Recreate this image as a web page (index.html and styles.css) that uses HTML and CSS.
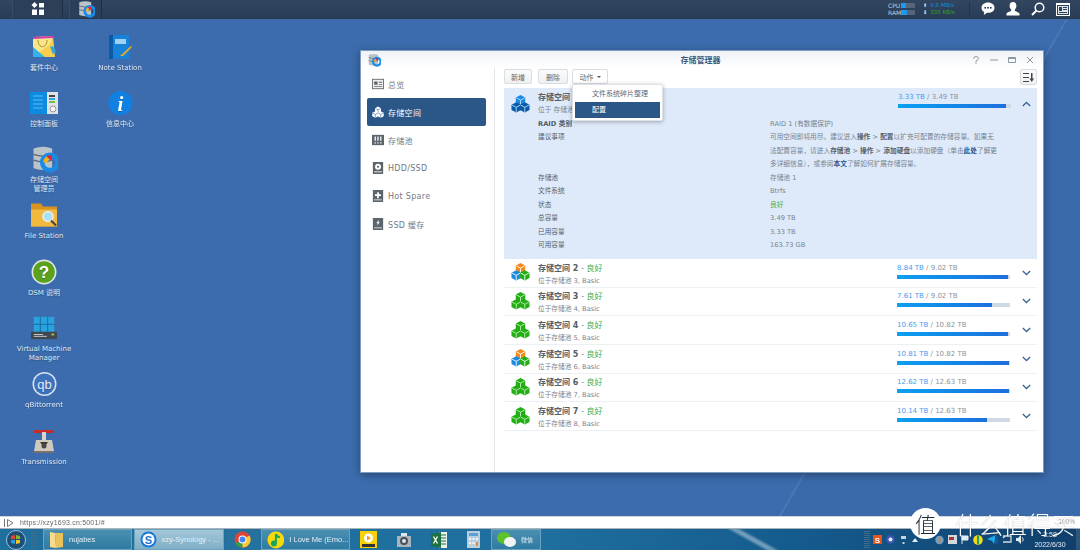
FILE: index.html
```html
<!DOCTYPE html>
<html lang="zh-CN">
<head>
<meta charset="utf-8">
<title>存储管理器</title>
<link rel="stylesheet" href="styles.css">
</head>
<body>
<svg class="defs" width="0" height="0">
  <symbol id="cubes" viewBox="0 0 20 20">
    <g class="cube-top"><path d="M10 1l5 2.6v5.6l-5 2.6-5-2.6V3.600z"/><path class="cube-line" d="M5.500 4l4.500 2.400L14.500 4M10 6.400v5"/></g>
    <g class="cube-left"><path d="M5.500 8.600l5 2.600v5.700l-5 2.600-5-2.600v-5.700z"/><path class="cube-line" d="M1 11.600l4.500 2.400 4.500-2.400M5.500 14v5"/></g>
    <g class="cube-right"><path d="M14.500 8.600l5 2.600v5.700l-5 2.600-5-2.600v-5.700z"/><path class="cube-line" d="M10 11.600l4.500 2.400 4.500-2.400M14.500 14v5"/></g>
  </symbol>
  <symbol id="storage" viewBox="0 0 24 24">
    <path d="M3 3q8-3 16 0v17q-8 3-16 0z" fill="#b9c3c9"/>
    <path d="M3 8q8 3 16 0M3 13q8 3 16 0" fill="none" stroke="#5c666c" stroke-width="1.200"/>
    <circle cx="17" cy="15" r="6.500" fill="none" stroke="#1b8be8" stroke-width="4"/>
    <path d="M11.500 15a6 6 0 0 1 3-5.300l1.500 3a3 3 0 0 0-1 2.300z" fill="#f7b21a"/>
    <path d="M14.500 9.500l4-1 .5 4.500-2.500-.5z" fill="#e3222a"/>
  </symbol>
</svg>

<div class="screen">
  <header class="topbar">
    <div class="top-left">
      <div class="top-btn top-grid"><svg width="14" height="14" viewBox="0 0 14 14"><path class="w" d="M3.500 0l3 3-3 3-3-3zM8 1h5v4.500H8zM1 7.500h5V13H1zM8 7.500h5V13H8z"/></svg></div>
      <div class="top-btn top-app"><svg width="18" height="18"><use href="#storage"/></svg></div>
    </div>
    <div class="top-right">
      <div class="meters">
        <div class="meter"><span>CPU</span><i class="m-bar"><b class="m-cpu"></b></i></div>
        <div class="meter"><span>RAM</span><i class="m-bar"><b class="m-ram"></b></i></div>
      </div>
      <div class="rates">
        <div class="rate up"><em>⬆</em>9.8 MB/s</div>
        <div class="rate down"><em>⬇</em>335 KB/s</div>
      </div>
      <div class="top-icons">
        <svg width="14" height="14" viewBox="0 0 15 14"><path class="w" d="M7.500 0C3.400 0 .5 2.500.5 5.700c0 2 1.100 3.600 2.900 4.600L3 13.500l3.500-2.400h1C11.600 11.100 14.500 8.900 14.500 5.700S11.600 0 7.500 0z"/><circle cx="4.500" cy="5.700" r="1" fill="#2d415b"/><circle cx="7.500" cy="5.700" r="1" fill="#2d415b"/><circle cx="10.500" cy="5.700" r="1" fill="#2d415b"/></svg>
        <svg width="14" height="14" viewBox="0 0 14 14"><path class="w" d="M7 0c2.200 0 3.400 1.700 3.400 3.800 0 1.600-.7 3-1.500 3.800v1.500c1.700.6 4.100 1.300 4.600 2.500v2H.5v-2c.5-1.200 2.900-1.900 4.600-2.500V7.600C4.300 6.800 3.600 5.400 3.600 3.800 3.600 1.700 4.800 0 7 0z"/></svg>
        <svg width="14" height="14" viewBox="0 0 14 14"><circle cx="8.500" cy="5.500" r="4.300" fill="none" stroke="#fff" stroke-width="1.500"/><path d="M5.500 8.500L1 13" stroke="#fff" stroke-width="2"/></svg>
        <svg width="14" height="13" viewBox="0 0 14 13"><path class="w" d="M0 0h14v13H0z"/><path d="M1 2h12v10H1z" fill="#2d415b"/><path d="M2 3h10v8H2z" fill="#dfe5ea"/><path d="M3 4h3v4H3z" fill="#2d415b"/><path d="M7 4.500h4M7 6.500h4M3 9.500h8" stroke="#2d415b"/></svg>
      </div>
    </div>
  </header>

  <main class="desktop">
    <div class="icons">
      <a class="dicon"><svg class="ic" width="26" height="26" viewBox="0 0 26 26"><path d="M2 3l20-1 2 21H2z" fill="#f7cf4a"/><path d="M2 3l20-1v3H2z" fill="#d63bb0"/><path d="M2 5l20-1-4 7-16 12z" fill="#f8e68a"/><path d="M2 13l12 10H2z" fill="#35b3e8"/><path d="M7 6c0 9 9 9 9 0" fill="none" stroke="#b5862a"/><path d="M19 13l3-1 3 6-3 2z" fill="#3aa5dc"/></svg><span>套件中心</span></a>
      <a class="dicon"><svg class="ic" width="28" height="24" viewBox="0 0 28 24"><path d="M0 1h17v22H0z" fill="#0d8be0"/><path d="M17 1h11v22H17z" fill="#dfe3e6"/><path d="M3 5h10M3 9h10M3 13h10M3 17h10" stroke="#5cbcf2"/><path d="M19 4h6v2h-6z" fill="#444"/><path d="M19 7h6v2h-6z" fill="#2aa7e6"/><path d="M19 10h6v2h-6z" fill="#7ac142"/><circle cx="23" cy="18" r="3" fill="#f5f5f5" stroke="#999"/></svg><span>控制面板</span></a>
      <a class="dicon"><svg class="ic" width="28" height="28"><use href="#storage"/></svg><span>存储空间<br>管理员</span></a>
      <a class="dicon"><svg class="ic" width="28" height="25" viewBox="0 0 28 25"><path d="M1 1h10l2 3h14v20H1z" fill="#d8941e"/><path d="M1 7h26v17H1z" fill="#f2b93f"/><circle cx="18" cy="14" r="5" fill="#a8e0f5" stroke="#eee" stroke-width="1.500"/><path d="M21 18l5 5" stroke="#444" stroke-width="2"/></svg><span>File Station</span></a>
      <a class="dicon"><svg class="ic" width="26" height="26" viewBox="0 0 26 26"><circle cx="13" cy="13" r="12.500" fill="#dfe6e0"/><circle cx="13" cy="13" r="10.800" fill="#5aa11e"/><text x="13" y="19" class="q-glyph">?</text></svg><span>DSM 说明</span></a>
      <a class="dicon"><svg class="ic" width="26" height="26" viewBox="0 0 28 26"><path d="M3 1h22v17H3z" fill="#29a3e0"/><path d="M10 1v17M18 1v17M3 9h22" stroke="#14689e"/><path d="M0 17h28v8H0z" fill="#40474e"/><path d="M3 20h10M3 22h14" stroke="#cbd0d3"/><path d="M22 20h3" stroke="#a3c94a" stroke-width="2"/></svg><span>Virtual Machine<br>Manager</span></a>
      <a class="dicon"><svg class="ic" width="25" height="25" viewBox="0 0 25 25"><circle cx="12.500" cy="12.500" r="12" fill="#d7e2f2"/><circle cx="12.500" cy="12.500" r="10.500" fill="#3f72bd"/><text x="12.500" y="17" class="qb-glyph">qb</text></svg><span>qBittorrent</span></a>
      <a class="dicon"><svg class="ic" width="22" height="24" viewBox="0 0 22 24"><path d="M3 11h16l2 11H1z" fill="#cfc9c0"/><path d="M1 22h20v2H1z" fill="#77716a"/><path d="M1 1h20v3H1z" fill="#c62a2a"/><path d="M9 3h4v8H9z" fill="#d8d3cc"/><path d="M7 13h8l-2 3h-4z" fill="#3f3a36"/><circle cx="11" cy="17" r="2.500" fill="#4c4742"/></svg><span>Transmission</span></a>
      <a class="dicon"><svg class="ic" width="26" height="26" viewBox="0 0 26 26"><path d="M2 1h20v24H2z" fill="#1882d8"/><path d="M2 1h4v24H2z" fill="#0b5aa8"/><path d="M8 5h11v5H8z" fill="#9fd1f3"/><path d="M24 12L13 22l3 0 9-9z" fill="#f2a81d"/></svg><span>Note Station</span></a>
      <a class="dicon"><svg class="ic" width="25" height="25" viewBox="0 0 25 25"><circle cx="12.500" cy="12.500" r="12" fill="#1080e2"/><text x="12.500" y="20" class="i-glyph">i</text></svg><span>信息中心</span></a>
    </div>

    <section class="window">
      <div class="titlebar">
        <svg class="title-icon" width="14" height="14"><use href="#storage"/></svg>
        <h1>存储管理器</h1>
        <div class="win-btns">
          <svg width="8" height="8" viewBox="0 0 8 8"><path d="M1.500 2.500Q2 .5 4 .5t2.500 2Q6 4 4 5v1.500M4 7v1" class="wb"/></svg>
          <svg width="8" height="8" viewBox="0 0 8 8"><path d="M0 4h8" class="wb"/></svg>
          <svg width="8" height="8" viewBox="0 0 8 8"><path d="M.5 1.500h7v5h-7zM.5 2.500h7" class="wb"/></svg>
          <svg width="8" height="8" viewBox="0 0 8 8"><path d="M1 1l6 6M7 1L1 7" class="wb"/></svg>
        </div>
      </div>
      <div class="win-body">
        <nav class="side">
          <a class="nav"><svg viewBox="0 0 14 12"><path class="g" d="M0 0h14v12H0z"/><path d="M1 1h12v10H1z" fill="#f0f0f0"/><path class="g" d="M2.500 3h4v4h-4zM8 3.500h4v1H8zM8 6h4v1H8zM2.500 8.500H12v1H2.500z"/></svg>总览</a>
          <a class="nav active"><svg viewBox="0 0 20 20"><use href="#cubes" class="c-white"/></svg>存储空间</a>
          <a class="nav"><svg viewBox="0 0 14 12"><path class="g" d="M0 0h14v12H0z"/><path d="M3 2h1.500v5H3zM6.200 2h1.500v5H6.200zM9.500 2H11v5H9.500zM3 8.500h1.500V10H3zM6.200 8.500h1.500V10H6.200zM9.500 8.500H11V10H9.500z" fill="#fff"/></svg>存储池</a>
          <a class="nav"><svg viewBox="0 0 14 14"><path class="g" d="M1 0h12v14H1z"/><circle cx="7" cy="5.500" r="3.500" fill="#fff"/><circle cx="7" cy="5.500" r="1.200" fill="#555"/><path d="M2.500 11h9v1h-9z" fill="#fff"/></svg>HDD/SSD</a>
          <a class="nav"><svg viewBox="0 0 14 14"><path class="g" d="M1 0h12v14H1z"/><path d="M6 2.500h2V5h2.500v2H8v2.500H6V7H3.500V5H6zM2.500 11h9v1h-9z" fill="#fff"/></svg>Hot Spare</a>
          <a class="nav"><svg viewBox="0 0 14 14"><path class="g" d="M1 0h12v14H1z"/><path d="M8 2L5 6h2l-1 3 3-4H7.500zM2.500 11h9v1h-9z" fill="#fff"/></svg>SSD 缓存</a>
        </nav>
        <div class="content">
          <div class="toolbar">
            <button class="btn">新增</button>
            <button class="btn btn-del">删除</button>
            <button class="btn btn-action">动作<i class="caret"></i></button>
            <button class="btn btn-view"><svg width="11" height="9" viewBox="0 0 11 9"><path d="M0 .500h6M0 4.500h6M0 8.500h6" stroke="#444" fill="none"/><path d="M8 0h1.500v5.500H11L8.750 9 6.500 5.500H8z" fill="#444"/></svg></button>
          </div>
          <div class="menu">
            <div class="menu-item first">文件系统碎片整理</div>
            <div class="menu-item sel">配置</div>
          </div>

          <article class="vol open">
            <div class="vol-head">
              <svg class="cube-ic" width="19" height="19"><use href="#cubes" class="c-blue"/></svg>
              <div class="vol-name">
                <div class="vol-title">存储空间</div>
                <div class="vol-sub">位于 存储池</div>
              </div>
              <div class="usage"><div class="usage-txt"><b>3.33 TB</b> / 3.49 TB</div><div class="bar"><div class="fill" style="width:95.500%"></div></div></div>
              <svg class="chev" width="9" height="6" viewBox="0 0 9 6"><path d="M.8 5L4.500 1.500 8.200 5"/></svg>
            </div>
            <dl class="facts">
              <dt class="strong">RAID 类别</dt><dd>RAID 1 (有数据保护)</dd>
              <dt class="tall-label">建议事项</dt><dd class="advice">可用空间即将用尽。建议进入<strong>操作</strong> &gt; <strong>配置</strong>以扩充可配置的存储容量。如果无<br>法配置容量，请进入<strong>存储池</strong> &gt; <strong>操作</strong> &gt; <strong>添加硬盘</strong>以添加硬盘（单击<a>此处</a>了解更<br>多详细信息），或参阅<a>本文</a>了解如何扩展存储容量。</dd>
              <dt>存储池</dt><dd>存储池 1</dd>
              <dt>文件系统</dt><dd>Btrfs</dd>
              <dt>状态</dt><dd class="ok">良好</dd>
              <dt>总容量</dt><dd>3.49 TB</dd>
              <dt>已用容量</dt><dd>3.33 TB</dd>
              <dt>可用容量</dt><dd>163.73 GB</dd>
            </dl>
          </article>

          <article class="vol row">
            <svg class="cube-ic" width="19" height="19"><use href="#cubes" class="c-mixed"/></svg>
            <div class="vol-name"><div class="vol-title">存储空间 2 <span class="dash">- </span><span class="ok">良好</span></div><div class="vol-sub">位于存储池 3, Basic</div></div>
            <div class="usage"><div class="usage-txt"><b>8.84 TB</b> / 9.02 TB</div><div class="bar"><div class="fill" style="width:98%"></div></div></div>
            <svg class="chev" width="9" height="6" viewBox="0 0 9 6"><path d="M.8 1L4.500 4.500 8.200 1"/></svg>
          </article>
          <article class="vol row">
            <svg class="cube-ic" width="19" height="19"><use href="#cubes" class="c-green"/></svg>
            <div class="vol-name"><div class="vol-title">存储空间 3 <span class="dash">- </span><span class="ok">良好</span></div><div class="vol-sub">位于存储池 4, Basic</div></div>
            <div class="usage"><div class="usage-txt"><b>7.61 TB</b> / 9.02 TB</div><div class="bar"><div class="fill" style="width:84%"></div></div></div>
            <svg class="chev" width="9" height="6" viewBox="0 0 9 6"><path d="M.8 1L4.500 4.500 8.200 1"/></svg>
          </article>
          <article class="vol row">
            <svg class="cube-ic" width="19" height="19"><use href="#cubes" class="c-green"/></svg>
            <div class="vol-name"><div class="vol-title">存储空间 4 <span class="dash">- </span><span class="ok">良好</span></div><div class="vol-sub">位于存储池 5, Basic</div></div>
            <div class="usage"><div class="usage-txt"><b>10.65 TB</b> / 10.82 TB</div><div class="bar"><div class="fill" style="width:98.500%"></div></div></div>
            <svg class="chev" width="9" height="6" viewBox="0 0 9 6"><path d="M.8 1L4.500 4.500 8.200 1"/></svg>
          </article>
          <article class="vol row">
            <svg class="cube-ic" width="19" height="19"><use href="#cubes" class="c-mixed"/></svg>
            <div class="vol-name"><div class="vol-title">存储空间 5 <span class="dash">- </span><span class="ok">良好</span></div><div class="vol-sub">位于存储池 6, Basic</div></div>
            <div class="usage"><div class="usage-txt"><b>10.81 TB</b> / 10.82 TB</div><div class="bar"><div class="fill" style="width:99.500%"></div></div></div>
            <svg class="chev" width="9" height="6" viewBox="0 0 9 6"><path d="M.8 1L4.500 4.500 8.200 1"/></svg>
          </article>
          <article class="vol row">
            <svg class="cube-ic" width="19" height="19"><use href="#cubes" class="c-green"/></svg>
            <div class="vol-name"><div class="vol-title">存储空间 6 <span class="dash">- </span><span class="ok">良好</span></div><div class="vol-sub">位于存储池 7, Basic</div></div>
            <div class="usage"><div class="usage-txt"><b>12.62 TB</b> / 12.63 TB</div><div class="bar"><div class="fill" style="width:99.500%"></div></div></div>
            <svg class="chev" width="9" height="6" viewBox="0 0 9 6"><path d="M.8 1L4.500 4.500 8.200 1"/></svg>
          </article>
          <article class="vol row">
            <svg class="cube-ic" width="19" height="19"><use href="#cubes" class="c-green"/></svg>
            <div class="vol-name"><div class="vol-title">存储空间 7 <span class="dash">- </span><span class="ok">良好</span></div><div class="vol-sub">位于存储池 8, Basic</div></div>
            <div class="usage"><div class="usage-txt"><b>10.14 TB</b> / 12.63 TB</div><div class="bar"><div class="fill" style="width:80%"></div></div></div>
            <svg class="chev" width="9" height="6" viewBox="0 0 9 6"><path d="M.8 1L4.500 4.500 8.200 1"/></svg>
          </article>
        </div>
      </div>
    </section>
  </main>

  <div class="urlbar">
    <svg width="10" height="8" viewBox="0 0 10 8"><path d="M.5 0v8M3.500.5L9 4 3.500 7.500z" fill="none" stroke="#777"/></svg>
    <span>https://xzy1693.cn:5001/#</span>
  </div>

  <footer class="taskbar">
    <div class="orb"><svg width="20" height="20" viewBox="0 0 20 20"><circle cx="10" cy="10" r="9.500" fill="#1d4f78" stroke="#9cc4da"/><path d="M5 6l4-1v4H5z" fill="#e8452c"/><path d="M10 5l4 1v3h-4z" fill="#7dba2f"/><path d="M5 10h4v4l-4-1z" fill="#2e9be0"/><path d="M10 10h4v3l-4 1z" fill="#f6c21c"/></svg></div>
    <div class="grip first-grip"></div>
    <div class="task wide"><svg width="15" height="18" viewBox="0 0 15 18"><path d="M1 1l5 1 1 15-6-1z" fill="#f6dd8e"/><path d="M6 2h8v14l-7 1z" fill="#e9c25c"/></svg><span>nujabes</span></div>
    <div class="task wide light"><svg width="17" height="17" viewBox="0 0 17 17"><circle cx="8.500" cy="8.500" r="8" fill="#1b78d8"/><circle cx="8.500" cy="8.500" r="6" fill="#fff"/><text x="8.500" y="12.500" class="s-glyph">S</text></svg><span>xzy-Synology - ...</span></div>
    <div class="task small"><svg width="17" height="17" viewBox="0 0 17 17"><circle cx="8.500" cy="8.500" r="8" fill="#de4437"/><path d="M8.500 8.500L1.500 12.500A8 8 0 0 0 8.500 16.500z" fill="#2ba24c"/><path d="M8.500 8.500l7-4A8 8 0 0 1 8.500 16.500z" fill="#fcc934"/><circle cx="8.500" cy="8.500" r="4" fill="#fff"/><circle cx="8.500" cy="8.500" r="3" fill="#4285f4"/></svg></div>
    <div class="task wide"><svg width="18" height="18" viewBox="0 0 18 18"><circle cx="9" cy="9" r="8.500" fill="#f5d90a"/><path d="M9 3v9" stroke="#16a75c" stroke-width="2"/><path d="M9 3q1 3 4 3" stroke="#16a75c" stroke-width="2" fill="none"/><circle cx="7" cy="12.500" r="3" fill="#16a75c"/></svg><span>I Love Me (Emo...</span></div>
    <div class="tray-app"><svg width="17" height="17" viewBox="0 0 17 17"><path d="M0 0h17v17H0z" fill="#f7d008"/><circle cx="8.500" cy="7" r="4.500" fill="#fff"/><path d="M7 4.500L11 7l-4 2.500z" fill="#f7a008"/><path d="M2 13h13v3H2z" fill="#333"/></svg></div>
    <div class="tray-app"><svg width="16" height="16" viewBox="0 0 16 16"><path d="M1 4h14v11H1z" fill="#aab4bd"/><circle cx="8" cy="9" r="4" fill="#46525c"/><circle cx="8" cy="9" r="2" fill="#dfe5ea"/><path d="M5 1h6v3H5z" fill="#dfe5ea"/></svg></div>
    <div class="tray-app"><svg width="16" height="16" viewBox="0 0 16 16"><path d="M8 0h8v16H8z" fill="#e8f1ea"/><path d="M10 3h5M10 6h5M10 9h5M10 12h5" stroke="#1d7145"/><path d="M0 2l10-2v16L0 14z" fill="#1d7145"/><path d="M2.500 4.500l4 7M6.500 4.500l-4 7" stroke="#fff" stroke-width="1.300"/></svg></div>
    <div class="tray-app"><svg width="13" height="17" viewBox="0 0 13 17"><path d="M0 0h13v17H0z" fill="#b8cfdf"/><path d="M2 2h9v3H2z" fill="#5da1d2"/><path d="M2 7h2v2H2zM5.500 7h2v2h-2zM9 7h2v2H9zM2 11h2v2H2zM5.500 11h2v2h-2z" fill="#f1f5f7"/><path d="M9 11h2v4H9z" fill="#e98a35"/></svg></div>
    <div class="task wechat"><svg width="19" height="16" viewBox="0 0 19 16"><ellipse cx="7" cy="6" rx="7" ry="6" fill="#5ec22c"/><ellipse cx="13" cy="10" rx="6" ry="5" fill="#f3f3f3"/></svg><span>微信</span></div>
    <div class="spacer"></div>
    <div class="grip"></div>
    <div class="tray">
      <svg width="9" height="9" viewBox="0 0 9 9"><path d="M0 0h9v9H0z" fill="#e7541b"/><text x="4.500" y="8" class="s2-glyph">S</text></svg>
      <svg width="9" height="9" viewBox="0 0 9 9"><circle cx="4.500" cy="4.500" r="4.200" fill="#3d58b0"/><circle cx="4.500" cy="4.500" r="2" fill="#e3e8f5"/></svg>
      <svg width="9" height="9" viewBox="0 0 9 9"><path d="M2 1h5v3H2zM3.500 7h2v2h-2z" fill="#c9d5dc"/></svg>
      <svg width="6" height="4" viewBox="0 0 6 4"><path d="M3 0l3 4H0z" fill="#e6edf2"/></svg>
      <span class="tray-gap"></span>
      <svg width="9" height="10" viewBox="0 0 9 10"><circle cx="4.500" cy="5" r="4.200" fill="#6ba2d4"/><path d="M4.500 2v6" stroke="#d58126" stroke-width="2"/></svg>
      <svg width="9" height="9" viewBox="0 0 9 9"><path d="M0 0h9v9H0z" fill="#d5d9dc"/><path d="M1 2h5v3H1z" fill="#a33"/></svg>
      <svg width="8" height="9" viewBox="0 0 8 9"><path d="M1 0v9M1 1h6v4H1z" fill="#e6edf2" stroke="#e6edf2"/></svg>
      <svg width="10" height="10" viewBox="0 0 10 10"><circle cx="5" cy="5" r="4.800" fill="#f2d91b"/><path d="M5 1v8" stroke="#1ea45a" stroke-width="2"/></svg>
      <svg width="11" height="9" viewBox="0 0 11 9"><path d="M0 4l9-4-2 9-2-3z" fill="#1fa9e8"/><path d="M8 1h3v8H8z" fill="#15a"/></svg>
      <svg width="10" height="9" viewBox="0 0 10 9"><path d="M1 1h8v6H1M3 1L1 3" fill="none" stroke="#d2dbe0" stroke-width="1.300"/></svg>
      <svg width="9" height="9" viewBox="0 0 9 9"><path d="M0 3h2l3-3v9L2 6H0z" fill="#e6edf2"/><path d="M6.500 2.500q1.500 2 0 4" stroke="#e6edf2" fill="none"/></svg>
    </div>
    <div class="clock"><div>3:58</div><div>2022/6/30</div></div>
    <div class="show-desk"></div>
  </footer>

  <div class="pct">100%</div>
  <div class="mark">
    <div class="mark-badge">值</div>
    <div class="mark-text">什么值得买</div>
  </div>
</div>
</body>
</html>
```
FILE: styles.css
```css
* { box-sizing: border-box; }
html, body { margin: 0; height: 100%; }
body {
  font-family: "DejaVu Sans", "Noto Sans CJK SC", sans-serif;
  font-size: 7px;
  color: #555;
  overflow: hidden;
}
.defs { position: absolute; }
.w { fill: #fff; }
.g { fill: #5d656c; }

.screen {
  position: relative;
  width: 1080px;
  height: 550px;
  display: flex;
  flex-direction: column;
  overflow: hidden;
  filter: blur(0.35px);
}

/* top bar */
.topbar {
  height: 19px;
  flex: none;
  display: flex;
  justify-content: space-between;
  background: linear-gradient(#33465f, #2a3d56);
  border-bottom: 1px solid #26374e;
}
.top-left { display: flex; padding-left: 12px; gap: 6px; }
.top-btn {
  width: 51px;
  display: flex;
  align-items: flex-start;
  justify-content: center;
  padding-top: 2px;
  background: #2c3f58;
  border-right: 1px solid #1f2e42;
  border-left: 1px solid #3a4d66;
}
.top-app { width: 33px; padding-top: 0; }
.top-right { display: flex; align-items: center; }
.meters { display: flex; flex-direction: column; margin-right: 8px; }
.meter { display: flex; align-items: center; height: 7px; color: #c6d0da; font-size: 6px; }
.meter span { width: 13px; }
.m-bar { display: block; width: 14px; height: 5px; background: #576578; }
.m-bar b { display: block; height: 100%; background: #1a9bf0; }
.m-cpu { width: 5px; }
.m-ram { width: 6px; }
.rates { display: flex; flex-direction: column; width: 46px; font-size: 5.500px; }
.rate { height: 7px; line-height: 7px; white-space: nowrap; }
.rate em { font-style: normal; color: #d9e0e6; margin-right: 3px; font-size: 5px; }
.up { color: #1888e0; }
.down { color: #35a32c; }
.top-icons {
  display: flex;
  align-items: center;
  gap: 11px;
  padding: 0 10px 0 11px;
  border-left: 1px solid #24344a;
  height: 14px;
}

/* desktop */
.desktop {
  flex: 1;
  position: relative;
  background:
    linear-gradient(120deg, transparent 0 923px, rgba(255,255,255,.07) 923px 925px, rgba(0,0,0,.02) 925px),
    #3c6cad;
}
.icons {
  display: grid;
  grid-auto-flow: column;
  grid-template-rows: repeat(8, 56.300px);
  grid-template-columns: repeat(2, 76px);
  justify-content: start;
  padding: 13.500px 0 0 6px;
  height: 100%;
}
.dicon {
  display: flex;
  flex-direction: column;
  align-items: center;
  color: #dfe9f5;
  font-size: 7px;
  line-height: 9px;
  text-align: center;
  text-shadow: 0 1px 1px rgba(0,0,0,.25);
}
.ic { height: 28px; margin-bottom: 3px; flex: none; }
.i-glyph { font: italic bold 21px "Liberation Serif", serif; fill: #fff; text-anchor: middle; }
.q-glyph { font: bold 17px "Liberation Sans", sans-serif; fill: #fff; text-anchor: middle; }
.qb-glyph { font: 13px "Liberation Sans", sans-serif; fill: #e6eefa; text-anchor: middle; }
.s-glyph { font: bold 11px "Liberation Sans", sans-serif; fill: #1b78d8; text-anchor: middle; }
.s2-glyph { font: bold 8px "Liberation Sans", sans-serif; fill: #fff; text-anchor: middle; }

/* window */
.window {
  position: absolute;
  left: 360px;
  top: 31px;
  width: 684px;
  height: 423px;
  background: #fff;
  border: 1px solid #7e9cc2;
  box-shadow: 0 2px 8px rgba(0,0,0,.35);
  display: flex;
  flex-direction: column;
}
.titlebar {
  height: 17px;
  flex: none;
  display: grid;
  grid-template-columns: 1fr auto 1fr;
  align-items: center;
  padding: 0 9px 0 6px;
  background: linear-gradient(#eef2f6, #fff);
}
.title-icon { flex: none; }
.titlebar h1 {
  margin: 0;
  text-align: center;
  font-size: 8px;
  font-weight: 700;
  color: #3d5a7d;
}
.win-btns { display: flex; gap: 10px; justify-self: end; }
.wb { fill: none; stroke: #8d979f; stroke-width: 1; }
.win-body { flex: 1; display: flex; min-height: 0; }

.side {
  width: 134px;
  flex: none;
  padding: 2px 8px 0 6px;
  border-right: 1px solid #e3e6ea;
  display: flex;
  flex-direction: column;
}
.nav {
  height: 28px;
  display: flex;
  align-items: center;
  gap: 4px;
  padding-left: 5px;
  font-size: 8px;
  color: #707a84;
  letter-spacing: .3px;
}
.nav svg { width: 12px; height: 12px; flex: none; }
.nav.active {
  background: #2a5788;
  border-radius: 2px;
  color: #fff;
}
.content {
  flex: 1;
  position: relative;
  padding: 1px 6px 0 9px;
}
.toolbar { display: flex; height: 19px; }
.btn {
  height: 15px;
  padding: 0;
  width: 28px;
  font: 7px "DejaVu Sans", "Noto Sans CJK SC", sans-serif;
  color: #666;
  background: linear-gradient(#fafbfc, #eef1f4);
  border: 1px solid #d8dde2;
  border-radius: 2px;
}
.btn-del { width: 30px; margin: 0 4px 0 6px; }
.btn-action { width: 36px; background: #fff; display: flex; align-items: center; justify-content: center; }
.caret {
  margin-left: 3px;
  border: 2px solid transparent;
  border-top-color: #555;
  border-bottom: 0;
}
.btn-view {
  width: 17px;
  margin-left: auto;
  height: 16px;
  display: flex;
  align-items: center;
  justify-content: center;
}
.menu {
  position: absolute;
  left: 77px;
  top: 16px;
  width: 91px;
  height: 37px;
  padding: 2px;
  z-index: 2;
  background: #fff;
  border: 1px solid #dfe3e7;
  border-radius: 2px;
  box-shadow: 0 1px 4px rgba(0,0,0,.3);
}
.menu-item {
  height: 16px;
  line-height: 16px;
  padding-left: 17px;
  font-size: 7px;
  color: #5c6670;
}
.menu-item.first { height: 14px; line-height: 14px; }
.menu-item.sel { background: #2a5788; color: #fff; margin-top: 1px; }

.vol { width: 533px; }
.vol.open {
  height: 171px;
  background: #deeafa;
  padding: 3px 6px 0 7px;
}
.vol-head { display: flex; align-items: center; height: 25px; gap: 8px; }
.vol-head .usage { margin-bottom: 7px; }
.vol-head .chev { margin-left: -1px; }
.cube-ic { flex: none; }
.vol-name { flex: 1; }
.vol-title { font-size: 8px; font-weight: 700; line-height: 12px; color: #555d66; }
.vol-sub { font-size: 6.700px; line-height: 12px; color: #78828c; }
.dash { font-weight: 400; color: #888; }
.ok { color: #4aaa3c; font-weight: 400; }
.usage { width: 113px; flex: none; margin-right: 4px; }
.usage-txt { font-size: 7px; line-height: 10px; color: #8a949e; }
.usage-txt b { font-weight: 400; color: #3f9cf0; }
.bar { height: 4px; margin-top: 2px; background: #cfd9e3; }
.fill { height: 100%; background: linear-gradient(90deg, #0aa0f2, #1d6fdc); }
.chev { flex: none; }
.chev path { fill: none; stroke: #3c6495; stroke-width: 1.300; }

.facts {
  margin: 1.500px 0 0;
  padding-left: 27px;
  display: grid;
  grid-template-columns: 232px 240px;
  grid-auto-rows: 13.550px;
  font-size: 6.700px;
  line-height: 13.550px;
  color: #666f78;
}
.facts dt { grid-column: 1; color: #555d66; }
.facts dt.strong { font-weight: 700; }
.facts dt.tall-label { grid-row: span 3; }
.facts dd { grid-column: 2; margin: 0; color: #78828c; white-space: nowrap; }
.facts dd.ok { color: #4aaa3c; }
.facts .advice { grid-row: span 3; }
.advice strong { color: #555d66; }
.advice a { color: #24538e; font-weight: 700; }

.vol.row {
  height: 28.660px;
  display: flex;
  align-items: center;
  gap: 8px;
  padding: 0 6px 0 7px;
  border-bottom: 1px solid #edf0f3;
}
.vol.row .cube-ic { margin-bottom: 2px; }
.vol.row .vol-name { margin-top: 4px; }
.vol.row .usage { margin-bottom: 4px; }

.c-blue { --a: #1c8ae0; --b: #0a5aa8; --c: #0a5aa8; --l: #bfe0fa; }
.c-green { --a: #22ae14; --b: #22ae14; --c: #22ae14; --l: #c6f0bf; }
.c-mixed { --a: #f58a1c; --b: #1c8ae0; --c: #22ae14; --l: #fff; }
.c-white { --a: #fff; --b: #fff; --c: #fff; --l: #2a5788; }
.cube-top > path:first-child { fill: var(--a); }
.cube-left > path:first-child { fill: var(--b); }
.cube-right > path:first-child { fill: var(--c); }
.cube-line { fill: none; stroke: var(--l); stroke-width: .9; }

/* url bar */
.urlbar {
  height: 13px;
  flex: none;
  display: flex;
  align-items: center;
  gap: 6px;
  padding-left: 4px;
  background: #fff;
  border-top: 1px solid #cfd6de;
  border-bottom: 1px solid #aab2ba;
  font: 7px "Liberation Sans", sans-serif;
  color: #666;
  letter-spacing: .2px;
}

/* taskbar */
.taskbar {
  position: relative;
  height: 21px;
  flex: none;
  display: flex;
  align-items: stretch;
  overflow: hidden;
  color: #e4eef5;
  font: 7.500px "Liberation Sans", "Noto Sans CJK SC", sans-serif;
  background: linear-gradient(90deg, #1f6f9f 0 50%, #145a8c 75%, #113f6c);
}
.taskbar::before {
  content: "";
  position: absolute;
  left: 748px;
  top: -2px;
  width: 10px;
  height: 25px;
  transform: skewX(61deg);
  background: rgba(255,255,255,.4);
  filter: blur(2px);
}
.orb { width: 31px; display: flex; align-items: center; justify-content: center; }
.grip {
  width: 6px;
  margin: 2px 3px 2px 0;
  background: repeating-linear-gradient(#3e6d8c 0 1px, transparent 1px 2px);
}
.first-grip { margin-right: 6px; }
.task {
  display: flex;
  align-items: center;
  gap: 5px;
  padding-left: 5px;
  margin-right: 1.500px;
  background: linear-gradient(#4a8fb0, #2f7ba3);
  border: 1px solid #6ba3bf;
  white-space: nowrap;
  overflow: hidden;
}
.task.wide { width: 89px; }
.task.light { background: linear-gradient(#a4c7d8, #7fafc6); width: 90px; }
.task.small { width: 34px; background: #26729f; border-color: #26729f; padding-left: 8px; }
.tray-app { width: 35px; display: flex; align-items: center; justify-content: center; }
.task.wechat { width: 50px; font-size: 6px; }
.spacer { flex: 1; }
.tray { display: flex; align-items: center; gap: 4px; }
.tray-gap { width: 9px; }
.clock {
  width: 36px;
  margin-left: 7.500px;
  display: flex;
  flex-direction: column;
  justify-content: center;
  align-items: center;
  gap: 2px;
  font-size: 7px;
  line-height: 8px;
}
.show-desk { width: 4px; margin-left: 8px; background: rgba(255,255,255,.12); }

/* overlays */
.pct {
  position: absolute;
  right: 5px;
  top: 518px;
  font: 6.500px "Liberation Sans", sans-serif;
  color: #999;
}
.mark {
  position: absolute;
  left: 910px;
  top: 508px;
  display: flex;
  align-items: center;
  gap: 14px;
  color: #fff;
}
.mark-badge {
  width: 31px;
  height: 31px;
  border-radius: 50%;
  background: #fff;
  color: #1e2a36;
  font: 300 21px "Noto Sans CJK SC", sans-serif;
  line-height: 30px;
  text-align: center;
}
.mark-text {
  font: 300 24px "Noto Sans CJK SC", sans-serif;
  line-height: 30px;
  white-space: nowrap;
  text-shadow: 0 0 1px rgba(90,90,90,.55);
}
```
